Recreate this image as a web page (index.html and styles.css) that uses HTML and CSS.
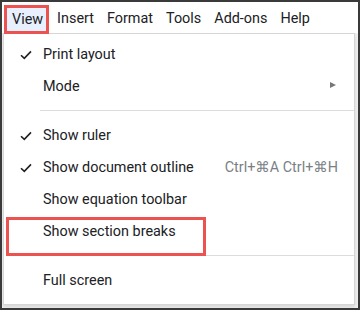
FILE: index.html
```html
<!DOCTYPE html>
<html>
<head>
<meta charset="utf-8">
<link rel="stylesheet" href="styles.css">
</head>
<body>
<div class="frame">
  <div class="menubar">
    <span class="menu-item active">View</span>
    <span class="menu-item">Insert</span>
    <span class="menu-item">Format</span>
    <span class="menu-item">Tools</span>
    <span class="menu-item">Add-ons</span>
    <span class="menu-item">Help</span>
  </div>
  <div class="canvas">
    <div class="dropdown">
      <div class="item">
        <svg class="check" width="12" height="10" viewBox="0 0 12 10"><path d="M1 5.2 L4.3 8.4 L11 1.4" fill="none" stroke="#202124" stroke-width="1.6"/></svg>
        <span class="label">Print layout</span>
      </div>
      <div class="item">
        <span class="label">Mode</span>
        <span class="arrow"></span>
      </div>
      <div class="sep"></div>
      <div class="item">
        <svg class="check" width="12" height="10" viewBox="0 0 12 10"><path d="M1 5.2 L4.3 8.4 L11 1.4" fill="none" stroke="#202124" stroke-width="1.6"/></svg>
        <span class="label">Show ruler</span>
      </div>
      <div class="item">
        <svg class="check" width="12" height="10" viewBox="0 0 12 10"><path d="M1 5.2 L4.3 8.4 L11 1.4" fill="none" stroke="#202124" stroke-width="1.6"/></svg>
        <span class="label">Show document outline</span>
        <span class="shortcut">Ctrl+⌘A Ctrl+⌘H</span>
      </div>
      <div class="item">
        <span class="label">Show equation toolbar</span>
      </div>
      <div class="item highlighted">
        <span class="label">Show section breaks</span>
      </div>
      <div class="sep"></div>
      <div class="item">
        <span class="label">Full screen</span>
      </div>
    </div>
  </div>
</div>
</body>
</html>
```

FILE: styles.css
```css
* { box-sizing: border-box; }
html, body { margin: 0; padding: 0; background: #fff; }
body {
  font-family: Roboto, "Liberation Sans", "DejaVu Sans", sans-serif;
  color: #202124;
  font-size: 14.4px;
}
.frame {
  width: 360px;
  height: 310px;
  border: 2px solid #3a3a3a;
  background: #f1f1f1;
  display: flex;
  flex-direction: column;
  overflow: hidden;
}
.menubar {
  height: 31px;
  background: #fff;
  display: flex;
  align-items: flex-start;
  padding-top: 3px;
  padding-left: 2px;
  gap: 13px;
  position: relative;
  z-index: 2;
}
.menu-item {
  font-size: 14.4px;
  line-height: 22px;
  margin-top: 3px;
}
.menu-item.active {
  margin-top: 0;
  background: #e8f0fe;
  border: 3px solid #ec5350;
  padding: 0 3px 0 5px;
  height: 29px;
  line-height: 23px;
  margin-right: -5px;
}
.canvas {
  flex: 1;
  padding-left: 1px;
}
.dropdown {
  width: 352px;
  height: 272px;
  background: #fff;
  border: 1px solid #d6d6d6;
  box-shadow: 0 2px 4px rgba(0,0,0,0.12);
  padding: 4px 0 7px 0;
}
.item {
  position: relative;
  height: 32px;
  display: flex;
  align-items: center;
  padding-left: 39px;
  padding-right: 16px;
}
.check {
  position: absolute;
  left: 16px;
  top: 12px;
}
.label { flex: 1; white-space: nowrap; }
.shortcut {
  color: #7b7f84;
  white-space: nowrap;
  font-family: Roboto, "DejaVu Sans", sans-serif;
}
.arrow {
  width: 0;
  height: 0;
  border-top: 3.5px solid transparent;
  border-bottom: 3.5px solid transparent;
  border-left: 6px solid #777;
  margin-right: 2px;
  margin-top: -2px;
}
.sep {
  height: 1px;
  background: #dadce0;
  margin: 8px 0 8px 36px;
}
.highlighted::after {
  content: "";
  position: absolute;
  left: 2px;
  top: 2px;
  width: 194px;
  height: 33px;
  border: 3px solid #ec5350;
}
```
